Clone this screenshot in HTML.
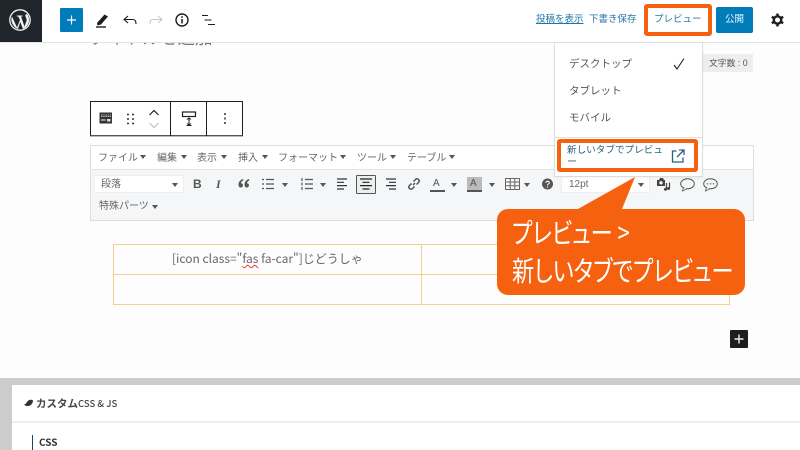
<!DOCTYPE html>
<html lang="ja"><head><meta charset="utf-8"><style>
html,body{margin:0;padding:0}
body{width:800px;height:450px;position:relative;overflow:hidden;background:#fdfdfd;font-family:"Liberation Sans","Noto Sans CJK JP",sans-serif;color:#555}
.a{position:absolute;white-space:nowrap;line-height:1}
.b{position:absolute;box-sizing:border-box}
svg{position:absolute;overflow:visible}
.m{font-size:10px;color:#666;top:154px}
.t{font-size:10px;color:#666}
.c{position:absolute;width:0;height:0;border-left:3px solid transparent;border-right:3px solid transparent;border-top:4px solid #555}
.ln{stroke:#555;stroke-width:1.2;fill:none}
.n{font-family:"Noto Sans CJK JP",sans-serif}
.big{font-family:"Noto Sans CJK JP",sans-serif;font-weight:400;font-feature-settings:"palt";color:#fff;transform-origin:0 0}
</style></head><body>

<div class="a" style="left:90px;top:30px;font-size:17.500px;color:#777">タイトルを追加</div>

<div class="b" style="left:0;top:0;width:800px;height:43px;background:#fff;border-bottom:1px solid #e2e4e7"></div>
<div class="b" style="left:0;top:0;width:42px;height:42px;background:#20252b"></div>
<svg style="left:9px;top:9px" width="24" height="24" viewBox="0 0 24 24"><circle cx="11" cy="11" r="10.2" fill="none" stroke="#f3f3f3" stroke-width="1.3"/><path d="M3 7.5L8 18.5 11 11 9.2 7.5H7.8V6.5H13.5V7.5H12L15.5 17.5 17.5 12C18 10 17 8.5 16.500 7.5 16 6.5 16.5 5 18 5 19.5 7 20 8.5 20 11 20 15 18 18 14 20L11.3 13 9 20C6 19 3.5 16 2.5 12 2.2 10.5 2.5 8.5 3 7.5Z" fill="#f3f3f3"/></svg>

<div class="b" style="left:60px;top:8px;width:23px;height:24px;background:#007cba;border-radius:1px"></div>
<svg style="left:60px;top:8px" width="23" height="24"><path d="M11.5 7.500v9M7 12h9" stroke="#fff" stroke-width="1.200"/></svg>
<svg style="left:94px;top:11px" width="16" height="18" viewBox="0 0 16 18"><path d="M3 12L10.5 3.5 14 5.5 7 13.5 3.5 14.5Z" fill="#1e1e1e"/><path d="M2 16h10" stroke="#1e1e1e" stroke-width="1.400"/></svg>
<svg style="left:122px;top:13px" width="16" height="14" viewBox="0 0 16 14"><path d="M6 3L2 6.5 6 10M2.5 6.5H11C13 6.5 14 8 14 11" fill="none" stroke="#1e1e1e" stroke-width="1.100"/></svg>
<svg style="left:148px;top:13px" width="16" height="14" viewBox="0 0 16 14"><path d="M10 3L14 6.5 10 10M13.5 6.5H5C3 6.5 2 8 2 11" fill="none" stroke="#c6c6c6" stroke-width="1.100"/></svg>
<svg style="left:174px;top:12px" width="16" height="16" viewBox="0 0 16 16"><circle cx="8" cy="8" r="6" fill="none" stroke="#1e1e1e" stroke-width="1.400"/><path d="M8 7v4.500" stroke="#1e1e1e" stroke-width="1.500"/><path d="M8 4.200v1.600" stroke="#1e1e1e" stroke-width="1.500"/></svg>
<svg style="left:200px;top:13px" width="16" height="14" viewBox="0 0 16 14"><path d="M2 2.500h6M4.500 7h7M8 11.500h7" stroke="#1e1e1e" stroke-width="1.100"/></svg>

<div class="a" style="left:536px;top:15px;font-size:9.500px;color:#1c76a8;text-decoration:underline">投稿を表示</div>
<div class="a" style="left:589px;top:15px;font-size:9.500px;color:#2a7ba8">下書き保存</div>
<div class="b" style="left:644px;top:4px;width:68px;height:32px;background:#fff;border:4px solid #f5610f;border-radius:3px"></div>
<div class="a" style="left:654px;top:15px;font-size:9.500px;color:#2a7ba8">プレビュー</div>
<div class="b" style="left:716px;top:7px;width:37px;height:26px;background:#007cba;border-radius:2px"></div>
<div class="a" style="left:725px;top:15px;font-size:9.500px;color:#f2f8fb">公開</div>
<svg style="left:770px;top:12px" width="15" height="16" viewBox="0 0 15 16"><circle cx="7.500" cy="8" r="3.700" fill="none" stroke="#1e1e1e" stroke-width="2.400"/><path d="M7.500 1.500v3M7.500 11.500v3M1.800 4.800l2.600 1.500M10.600 9.700l2.600 1.500M1.800 11.200l2.600-1.500M10.600 6.300l2.600-1.500" stroke="#1e1e1e" stroke-width="2.400"/></svg>

<div class="b" style="left:703px;top:54px;width:50px;height:18px;background:#eee"></div>
<div class="a" style="left:709px;top:59px;font-size:8.800px;color:#555">文字数 : 0</div>

<div class="b" style="left:90px;top:101px;width:153px;height:35px;background:#fff;border:1px solid #1e1e1e;border-bottom:1px solid #555;box-shadow:0 1px 0 #bbb"></div>
<div class="b" style="left:170px;top:101px;width:1px;height:35px;background:#1e1e1e"></div>
<div class="b" style="left:206px;top:101px;width:1px;height:35px;background:#1e1e1e"></div>
<svg style="left:99px;top:112px" width="14" height="13" viewBox="0 0 14 13"><rect x="0.500" y="0.500" width="12.500" height="11" fill="#333"/><path d="M2 3h10M2 4.500h10" stroke="#ddd" stroke-width="0.800" stroke-dasharray="1.500 .7"/><path d="M2 8h4.500" stroke="#ddd" stroke-width="1.200"/><rect x="8" y="7" width="3.500" height="2.500" fill="#ddd"/></svg>
<svg style="left:126px;top:113px" width="9" height="12"><path d="M1 1.500h2M6 1.500h2M1 6h2M6 6h2M1 10.500h2M6 10.500h2" stroke="#333" stroke-width="1.500"/></svg>
<svg style="left:148px;top:109px" width="12" height="8"><path d="M1.500 6L6 1.500 10.500 6" fill="none" stroke="#1e1e1e" stroke-width="1.200"/></svg>
<svg style="left:148px;top:121px" width="12" height="8"><path d="M1.500 2L6 6.500 10.500 2" fill="none" stroke="#c2c2c2" stroke-width="1.200"/></svg>
<svg style="left:181px;top:110px" width="16" height="17" viewBox="0 0 16 17"><rect x="1.500" y="2" width="13" height="4.500" fill="#fff" stroke="#1e1e1e" stroke-width="1.200"/><path d="M8 8v7M6 9.500L8 8l2 1.500M6 13.500L8 15l2-1.500M5.500 15.500h5" fill="none" stroke="#1e1e1e" stroke-width="1"/></svg>
<svg style="left:223px;top:112px" width="4" height="13"><path d="M2 1v2M2 5.500v2M2 10v2" stroke="#1e1e1e" stroke-width="1.400"/></svg>

<div class="b" style="left:90px;top:145px;width:664px;height:76px;background:#f5f6f7;border:1px solid #ddd"></div>
<div class="b" style="left:91px;top:146px;width:662px;height:24px;background:#fff;border-bottom:1px solid #e2e4e7"></div>
<div class="a m" style="left:98px">ファイル</div><div class="c" style="left:140px;top:155px"></div>
<div class="a m" style="left:157px">編集</div><div class="c" style="left:181px;top:155px"></div>
<div class="a m" style="left:197px">表示</div><div class="c" style="left:221px;top:155px"></div>
<div class="a m" style="left:238px">挿入</div><div class="c" style="left:262px;top:155px"></div>
<div class="a m" style="left:278px">フォーマット</div><div class="c" style="left:340px;top:155px"></div>
<div class="a m" style="left:357px">ツール</div><div class="c" style="left:390px;top:155px"></div>
<div class="a m" style="left:407px">テーブル</div><div class="c" style="left:449px;top:155px"></div>

<div class="b" style="left:94px;top:175px;width:90px;height:18px;background:#fff;border:1px solid #eee"></div>
<div class="a t" style="left:101px;top:180px">段落</div><div class="c" style="left:172px;top:183px"></div>
<div class="a" style="left:193px;top:178px;font-size:12px;font-weight:bold;color:#555">B</div>
<div class="a" style="left:216px;top:178px;font-size:12px;font-weight:bold;font-style:italic;font-family:'Liberation Serif',serif;color:#555">I</div>
<svg style="left:238px;top:179px" width="12" height="9" viewBox="0 0 12 9"><path d="M5 0C2 1 .5 3 .5 5.500 .5 7.500 1.500 8.500 2.800 8.500 4 8.500 5 7.500 5 6.200 5 5 4 4.200 3 4.200 3 3 3.800 2 5.500 1.200ZM11 0C8 1 6.500 3 6.500 5.500 6.500 7.500 7.500 8.500 8.800 8.500 10 8.500 11 7.500 11 6.200 11 5 10 4.200 9 4.200 9 3 9.800 2 11.500 1.200Z" fill="#555"/></svg>
<svg style="left:262px;top:178px" width="12" height="12"><path class="ln" d="M0 1.500h2M4 1.500h8M0 6h2M4 6h8M0 10.500h2M4 10.500h8"/></svg><div class="c" style="left:282px;top:183px"></div>
<svg style="left:301px;top:178px" width="12" height="12"><path class="ln" d="M1 0v3M1 4.500v3M1 9v3M4 1.500h8M4 6h8M4 10.500h8"/></svg><div class="c" style="left:320px;top:183px"></div>
<svg style="left:337px;top:178px" width="12" height="12"><path class="ln" d="M0 1h10M0 4.300h7M0 7.600h10M0 11h7" style="stroke:#333"/></svg>
<div class="b" style="left:356px;top:175px;width:20px;height:19px;background:#eef0f0;border:1px solid #555;border-radius:1px"></div>
<svg style="left:360px;top:178px" width="12" height="12"><path class="ln" d="M0 1h12M2.500 4.300h7M0 7.600h12M2.500 11h7" style="stroke:#222"/></svg>
<svg style="left:384px;top:178px" width="12" height="12"><path class="ln" d="M2 1h10M5 4.300h7M2 7.600h10M5 11h7" style="stroke:#333"/></svg>
<svg style="left:408px;top:178px" width="12" height="12" viewBox="0 0 12 12"><path d="M5 7L7 5M3.500 5.500L1.500 7.500C.5 8.500 .5 9.500 1.500 10.500 2.500 11.500 3.500 11.500 4.500 10.500L6.500 8.500M5.500 3.500L7.500 1.500C8.500.5 9.500.5 10.500 1.500 11.500 2.500 11.500 3.500 10.500 4.500L8.500 6.500" fill="none" stroke="#555" stroke-width="1.500"/></svg>
<div class="a" style="left:433px;top:179px;font-size:10px;color:#555">A</div><div class="b" style="left:430px;top:190px;width:15px;height:2px;background:#555"></div><div class="c" style="left:451px;top:183px"></div>
<div class="b" style="left:467px;top:177px;width:15px;height:15px;background:#bbb"></div><div class="a" style="left:470px;top:179px;font-size:10px;color:#555">A</div><div class="b" style="left:467px;top:190px;width:15px;height:2px;background:#555"></div><div class="c" style="left:489px;top:183px"></div>
<svg style="left:505px;top:178px" width="15" height="12"><path d="M.5.500h14v11H.500zM.5 4h14M.5 7.700h14M5.200.500v11M9.800.500v11" fill="none" stroke="#666"/></svg><div class="c" style="left:524px;top:183px"></div>
<svg style="left:542px;top:178px" width="12" height="12"><circle cx="5.500" cy="6" r="5.500" fill="#555"/><path d="M3.800 4.800C3.800 2.800 7.300 2.800 7.300 4.800 7.300 6 5.500 6 5.500 7.500M5.500 8.500v1.300" fill="none" stroke="#f5f6f7" stroke-width="1.100"/></svg>
<div class="b" style="left:561px;top:175px;width:89px;height:18px;background:#fff;border:1px solid #eee"></div>
<div class="a t" style="left:569px;top:180px">12pt</div><div class="c" style="left:638px;top:183px"></div>
<svg style="left:656px;top:177px" width="14" height="14" viewBox="0 0 14 14"><path d="M1 3h2l1-2h3l1 2h1v6H1z" fill="#444"/><circle cx="5" cy="5.800" r="1.700" fill="#f5f6f7"/><path d="M10.500 6v6.500M13.500 5.500v6" stroke="#444" stroke-width="1.200"/><circle cx="9.500" cy="12.300" r="1.500" fill="#444"/><circle cx="12.500" cy="11.500" r="1.500" fill="#444"/></svg>
<svg style="left:680px;top:178px" width="15" height="14" viewBox="0 0 15 14"><ellipse cx="7.500" cy="5.800" rx="6.800" ry="5" fill="none" stroke="#555"/><path d="M3.500 9.500L2.500 13 7 10.800" fill="#f5f6f7" stroke="#555" stroke-width=".8"/></svg>
<svg style="left:703px;top:178px" width="15" height="14" viewBox="0 0 15 14"><ellipse cx="7.500" cy="5.800" rx="6.800" ry="5" fill="none" stroke="#555"/><path d="M3.500 9.500L2.500 13 7 10.800" fill="#f5f6f7" stroke="#555" stroke-width=".8"/><path d="M3.800 5.800h1.400M6.800 5.800h1.400M9.800 5.800h1.400" stroke="#555" stroke-width="1.200"/></svg>
<div class="a t" style="left:99px;top:202px">特殊パーツ</div><div class="c" style="left:152px;top:205px"></div>

<div class="b" style="left:113px;top:244px;width:617px;height:61px;border:1px solid #f5cf90"></div>
<div class="b" style="left:113px;top:274px;width:617px;height:1px;background:#f5cf90"></div>
<div class="b" style="left:421px;top:244px;width:1px;height:61px;background:#f5cf90"></div>
<div class="a n" style="left:172px;top:253px;font-size:12px;color:#666">[icon class="<span style="text-decoration:underline wavy #e33 1px">fas</span> fa-car"]じどうしゃ</div>

<div class="b" style="left:730px;top:330px;width:18px;height:18px;background:#1e1e1e;border-radius:1px"></div>
<svg style="left:730px;top:330px" width="18" height="18"><path d="M9 4.500v9M4.500 9h9" stroke="#eee" stroke-width="1.400"/></svg>

<div class="b" style="left:554px;top:42px;width:149px;height:135px;background:#fff;border:1px solid #ddd;box-shadow:0 1px 2px rgba(0,0,0,.05)"></div>
<div class="b" style="left:555px;top:137px;width:147px;height:1px;background:#ddd"></div>
<div class="a" style="left:569px;top:59px;font-size:10.500px;color:#555">デスクトップ</div>
<svg style="left:672px;top:57px" width="14" height="14"><path d="M2 8L5 12 12 1.500" fill="none" stroke="#222" stroke-width="1.100"/></svg>
<div class="a" style="left:569px;top:86px;font-size:10.500px;color:#555">タブレット</div>
<div class="a" style="left:569px;top:113px;font-size:10.500px;color:#555">モバイル</div>
<div class="b" style="left:557px;top:139px;width:141px;height:33px;background:#fff;border:4px solid #f5610f;border-radius:3px"></div>
<div class="a" style="left:567px;top:146px;font-size:9.600px;color:#2b5f7f">新しいタブでプレビュ</div>
<div class="a" style="left:567px;top:158px;font-size:10px;color:#2b5f7f">ー</div>
<svg style="left:671px;top:149px" width="14" height="14" viewBox="0 0 14 14"><path d="M5.500 2H1.500v11h10.500V8.500M8 1h5v5M13 1L6 8" fill="none" stroke="#2b5f7f" stroke-width="1.300"/></svg>

<svg style="left:570px;top:170px" width="80" height="45"><path d="M8 39L65 7 52 39Z" fill="#f5610f"/></svg>
<div class="b" style="left:497px;top:209px;width:248px;height:86px;background:#f5610f;border-radius:11px"></div>
<div class="a big" style="left:512px;top:216px;font-size:28px;line-height:32px;transform:scaleX(.79)">プレビュー &gt;</div>
<div class="a big" style="left:512px;top:254px;font-size:28px;line-height:32px;transform:scaleX(.79)">新しいタブでプレビュー</div>

<div class="b" style="left:0;top:378px;width:800px;height:72px;background:#ccc"></div>
<div class="b" style="left:12px;top:385px;width:788px;height:65px;background:#fff"></div>
<div class="b" style="left:12px;top:421px;width:788px;height:2px;background:#eee"></div>
<svg style="left:24px;top:399px" width="10" height="8"><path d="M0 5C1 6 2 4.500 3 3 4 1 7 0 9 1.500 9 5 6 7.500 3 7 2 7 .5 6.500 0 5Z" fill="#333"/></svg>
<div class="a n" style="left:36px;top:399px;font-size:10.500px;font-weight:bold;color:#444">カスタム<span style="font-size:9.500px;font-weight:500">CSS &amp; JS</span></div>
<div class="b" style="left:32px;top:435px;width:1px;height:15px;background:#0a4b78"></div>
<div class="a n" style="left:39px;top:437px;font-size:10px;font-weight:bold;color:#333">CSS</div>
</body></html>
